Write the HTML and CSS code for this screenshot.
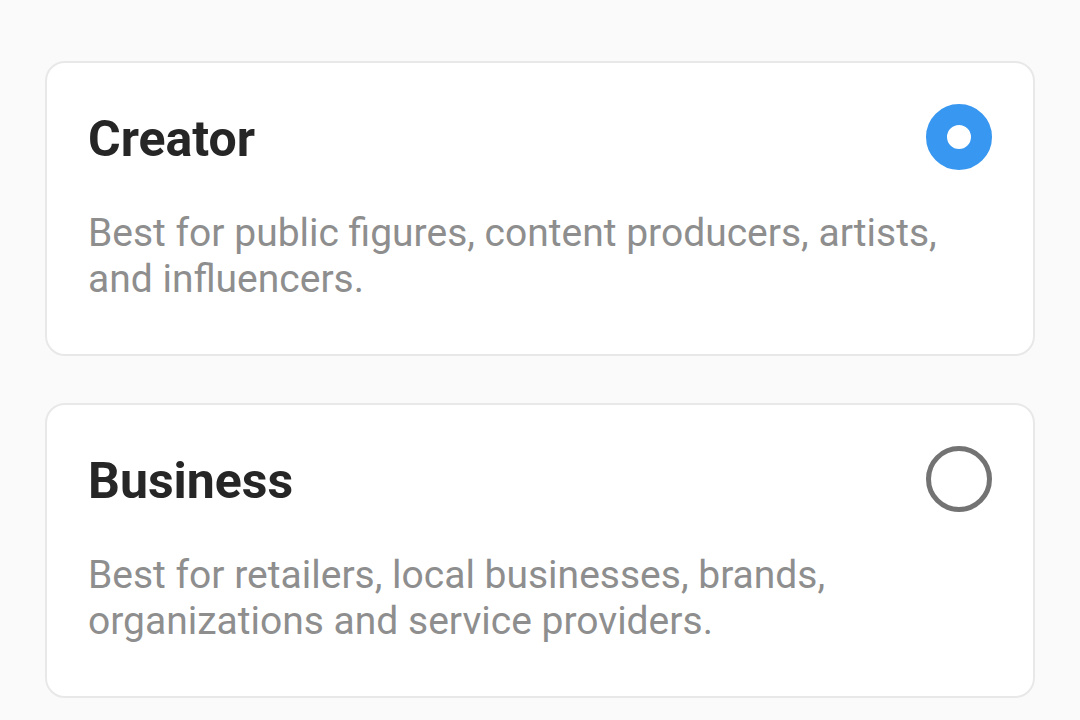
FILE: index.html
```html
<!DOCTYPE html>
<html lang="en">
<head>
    <meta charset="UTF-8">
    <meta name="viewport" content="width=device-width, initial-scale=1.0">
    <title>Account type</title>
    <link rel="stylesheet" href="styles.css">
</head>
<body>
    <div class="options">
        <div class="option selected">
            <div class="option-head">
                <h2 class="option-title">Creator</h2>
                <span class="radio"></span>
            </div>
            <p class="option-desc">Best for public figures, content producers, artists, and influencers.</p>
        </div>

        <div class="option">
            <div class="option-head">
                <h2 class="option-title">Business</h2>
                <span class="radio"></span>
            </div>
            <p class="option-desc">Best for retailers, local businesses, brands, organizations and service providers.</p>
        </div>
    </div>
</body>
</html>
```

FILE: styles.css
```css
body {
    margin: 0;
    background-color: #fafafa;
    font-family: 'Roboto', 'Liberation Sans', sans-serif;
    height: 100vh;
    overflow: hidden;
}

.options {
    display: flex;
    flex-direction: column;
    gap: 47px;
    padding: 61px 45px 0 45px;
}

.option {
    background-color: #ffffff;
    border: 2px solid #e8e8e8;
    border-radius: 20px;
    padding: 41px 41px 52px 41px;
}

.option-head {
    display: flex;
    align-items: center;
    justify-content: space-between;
}

.option-title {
    margin: 4px 0 0 0;
    font-size: 50px;
    line-height: 56px;
    font-weight: 700;
    color: #262626;
}

.radio {
    width: 66px;
    height: 66px;
    box-sizing: border-box;
    border-radius: 50%;
    border: 5px solid #737373;
    flex-shrink: 0;
}

.option.selected .radio {
    border: 21px solid #3897f0;
    background-color: #ffffff;
}

.option-desc {
    margin: 40px 0 0 0;
    font-size: 39px;
    line-height: 46px;
    color: #8e8e8e;
    max-width: 880px;
}
```
